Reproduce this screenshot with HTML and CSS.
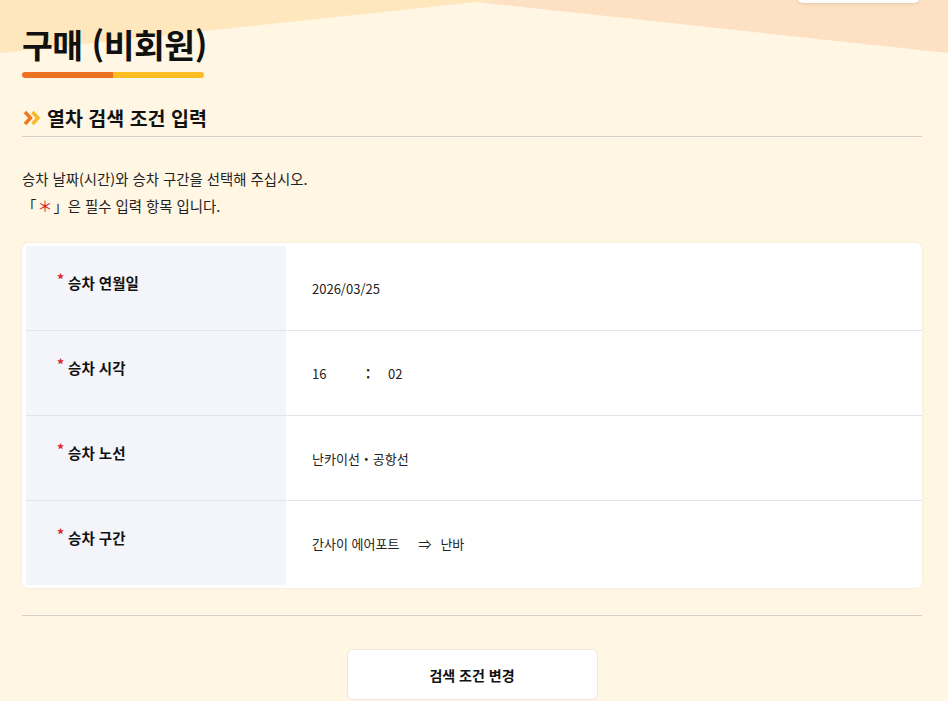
FILE: index.html
```html
<!DOCTYPE html>
<html lang="ko">
<head>
<meta charset="utf-8">
<title>구매 (비회원)</title>
<link rel="stylesheet" href="styles.css">
</head>
<body>
<svg class="deco" width="948" height="60" viewBox="0 0 948 60" aria-hidden="true">
  <polygon points="380,0 948,0 948,53 476,2" fill="#fee1c3"/>
  <polygon points="0,0 500,0 476,2 0,53" fill="#fee7bc"/>
</svg>
<div class="top-btn"></div>
<main class="page">
  <h1 class="title">구매 (비회원)</h1>
  <div class="title-bar"><span class="bar-a"></span><span class="bar-b"></span></div>

  <h2 class="section">
    <svg class="chev" width="18" height="16" viewBox="0 0 18 16" aria-hidden="true">
      <polyline points="2,2 7.5,8 2,14" fill="none" stroke="#ee7a1c" stroke-width="3.4"/>
      <polyline points="9.5,2 15,8 9.5,14" fill="none" stroke="#fbb824" stroke-width="3.4"/>
    </svg>
    <span>열차 검색 조건 입력</span>
  </h2>

  <div class="desc">
    <p>승차 날짜(시간)와 승차 구간을 선택해 주십시오.</p>
    <p>「<span class="req-big">＊</span>」은 필수 입력 항목 입니다.</p>
  </div>

  <div class="card">
    <div class="row">
      <div class="label"><span class="ast">*</span>승차 연월일</div>
      <div class="value">2026/03/25</div>
    </div>
    <div class="row">
      <div class="label"><span class="ast">*</span>승차 시각</div>
      <div class="value"><span class="hh">16</span><span class="colon">:</span><span>02</span></div>
    </div>
    <div class="row">
      <div class="label"><span class="ast">*</span>승차 노선</div>
      <div class="value">난카이선・공항선</div>
    </div>
    <div class="row">
      <div class="label"><span class="ast">*</span>승차 구간</div>
      <div class="value"><span>간사이 에어포트</span><span class="arrow">⇒</span><span>난바</span></div>
    </div>
  </div>

  <hr class="sep">

  <div class="actions">
    <button class="btn" type="button">검색 조건 변경</button>
  </div>
</main>
</body>
</html>
```
FILE: styles.css
```css
html, body {
  margin: 0;
  padding: 0;
}
body {
  background: #fff6e3;
  font-family: "Noto Sans CJK KR", "Noto Sans", sans-serif;
  color: #1a1a1a;
  position: relative;
  min-height: 701px;
  overflow: hidden;
}
.deco {
  position: absolute;
  top: 0;
  left: 0;
  z-index: 0;
}
.top-btn {
  position: absolute;
  top: -37px;
  left: 797px;
  width: 123px;
  height: 40px;
  background: #fff;
  border-radius: 6px;
  box-shadow: 0 1px 3px rgba(0,0,0,0.12);
  z-index: 1;
}
.page {
  position: relative;
  z-index: 1;
  width: 900px;
  margin-left: 22px;
  padding-top: 20px;
}
.title {
  margin: 0;
  font-size: 33.5px;
  line-height: 48px;
  font-weight: 700;
  color: #111;
  letter-spacing: -0.5px;
}
.title-bar {
  display: flex;
  width: 182px;
  height: 6px;
  margin-top: 4px;
  border-radius: 3px;
  overflow: hidden;
}
.bar-a { flex: 1; background: #ec721f; }
.bar-b { flex: 1; background: #fbbd22; }
.section {
  display: flex;
  align-items: center;
  gap: 6px;
  margin: 27px 0 0;
  padding-bottom: 5px;
  border-bottom: 1px solid #d6d1c9;
  font-size: 19.5px;
  line-height: 26px;
  font-weight: 700;
  color: #111;
}
.chev { margin-left: 1px; flex: none; }
.desc {
  margin-top: 28px;
  font-size: 14.4px;
  line-height: 27px;
  color: #222;
}
.desc p { margin: 0; }
.req-big { color: #d8232a; font-size: 15px; padding: 0 1px; }
.card {
  margin-top: 24px;
  background: #fff;
  border-radius: 6px;
  box-shadow: 0 0 3px rgba(0,0,0,0.08);
  padding: 3px 0 3px 4px;
}
.row {
  box-sizing: border-box;
  display: grid;
  grid-template-columns: 260px 1fr;
  height: 85px;
  border-bottom: 1px solid #e3e3ec;
}
.row:last-child { border-bottom: none; height: 84px; }
.label {
  background: #f4f5fb;
  padding: 27px 0 0 31px;
  font-size: 14.5px;
  line-height: 20px;
  font-weight: 700;
  color: #111;
}
.ast {
  color: #d8232a;
  font-size: 14px;
  margin-right: 4px;
  position: relative;
  top: -4px;
}
.value {
  display: flex;
  align-items: center;
  padding-left: 26px;
  font-size: 13px;
  color: #222;
}
.hh { width: 54px; }
.colon { width: 22px; font-weight: 700; }
.arrow { margin: 0 9px 0 19px; }
.sep {
  margin: 27px 0 0;
  border: none;
  border-top: 1px solid #d6d1c9;
  height: 0;
}
.actions {
  display: flex;
  justify-content: center;
  margin-top: 33px;
}
.btn {
  width: 251px;
  height: 51px;
  background: #fff;
  border: 1px solid #ece8e0;
  border-radius: 6px;
  font-family: inherit;
  font-size: 14px;
  font-weight: 700;
  color: #111;
  margin-left: 0;
}
```
